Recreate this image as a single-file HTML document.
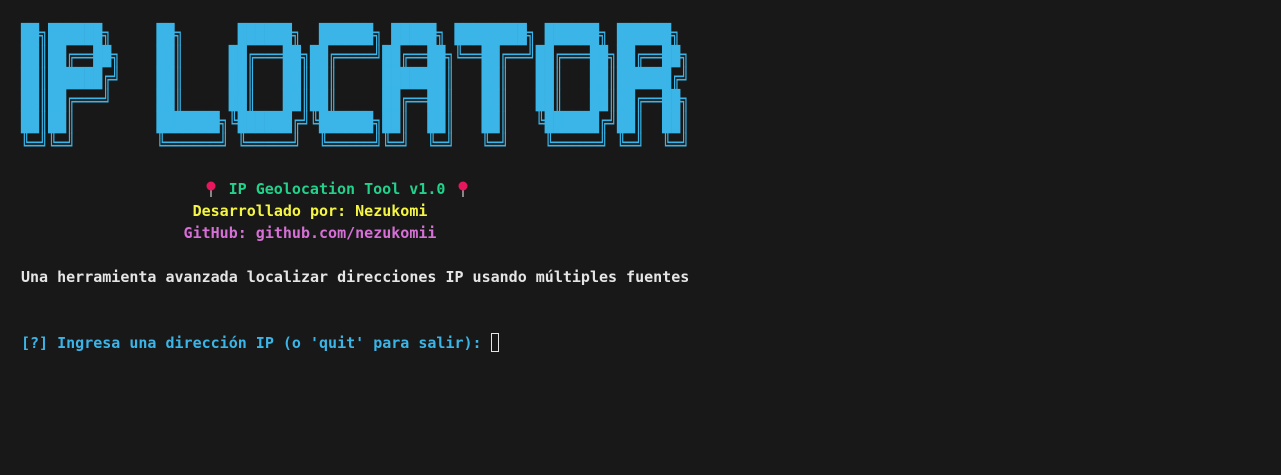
<!DOCTYPE html>
<html><head><meta charset="utf-8"><style>
html,body{margin:0;padding:0;background:#181818;width:1281px;height:475px;overflow:hidden}
.t{position:absolute;left:21px;top:24px;font-family:"DejaVu Sans Mono","Liberation Mono",monospace;font-size:15px;font-weight:bold;color:#e5e5e5}
.r{height:22px;line-height:22px;white-space:pre}
.a{height:22px;overflow:visible}
.a span{display:block;white-space:pre;line-height:17.46px;height:17.46px;transform:scaleY(1.26);transform-origin:0 0;color:#3bb5e8;font-weight:normal;font-family:"DejaVu Sans Mono",monospace}
.g{color:#23d18b}.y{color:#f5f543}.m{color:#d670d6}.c{color:#3bb5e8}
.pin{display:inline-block;width:18px;height:22px;vertical-align:top;position:relative}
.pin svg{position:absolute;left:2px;top:3px}
.cur{display:inline-block;width:8px;height:19px;border:1px solid #e5e5e5;vertical-align:top;margin-top:1px;box-sizing:border-box}
</style></head><body>
<div class="t"><div class="a"><span>██╗██████╗     ██╗      ██████╗  ██████╗ █████╗ ████████╗ ██████╗ ██████╗ </span></div><div class="a"><span>██║██╔══██╗    ██║     ██╔═══██╗██╔════╝██╔══██╗╚══██╔══╝██╔═══██╗██╔══██╗</span></div><div class="a"><span>██║██████╔╝    ██║     ██║   ██║██║     ███████║   ██║   ██║   ██║██████╔╝</span></div><div class="a"><span>██║██╔═══╝     ██║     ██║   ██║██║     ██╔══██║   ██║   ██║   ██║██╔══██╗</span></div><div class="a"><span>██║██║         ███████╗╚██████╔╝╚██████╗██║  ██║   ██║   ╚██████╔╝██║  ██║</span></div><div class="a"><span>╚═╝╚═╝         ╚══════╝ ╚═════╝  ╚═════╝╚═╝  ╚═╝   ╚═╝    ╚═════╝ ╚═╝  ╚═╝</span></div><div class="r"> </div><div class="r g">                    <span class="pin"><svg width="14" height="17" viewBox="0 0 14 17"><line x1="7" y1="8" x2="7" y2="16" stroke="#aaa" stroke-width="1.5"/><circle cx="7" cy="5" r="4.5" fill="#e8175d"/></svg></span> IP Geolocation Tool v1.0 <span class="pin"><svg width="14" height="17" viewBox="0 0 14 17"><line x1="7" y1="8" x2="7" y2="16" stroke="#aaa" stroke-width="1.5"/><circle cx="7" cy="5" r="4.5" fill="#e8175d"/></svg></span></div><div class="r y">                   Desarrollado por: Nezukomi</div><div class="r m">                  GitHub: github.com/nezukomii</div><div class="r"> </div><div class="r">Una herramienta avanzada localizar direcciones IP usando múltiples fuentes</div><div class="r"> </div><div class="r"> </div><div class="r c">[?] Ingresa una dirección IP (o 'quit' para salir): <span class="cur"></span></div></div>
</body></html>
